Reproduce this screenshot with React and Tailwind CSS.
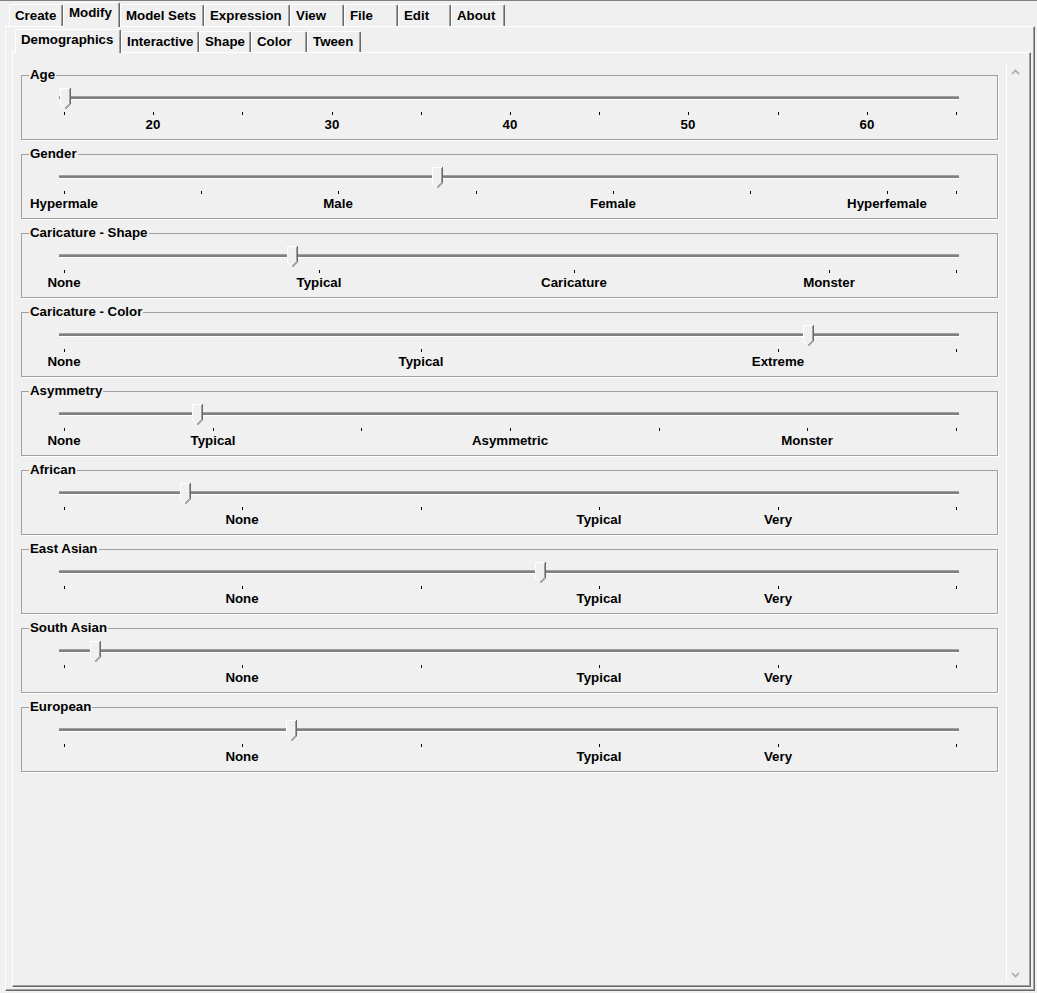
import React from 'react';

const topTabs = [
  { label: 'Create', w: 54 },
  { label: 'Modify', w: 57, active: true },
  { label: 'Model Sets', w: 84 },
  { label: 'Expression', w: 86 },
  { label: 'View', w: 54 },
  { label: 'File', w: 54 },
  { label: 'Edit', w: 53 },
  { label: 'About', w: 54 },
];

const subTabs = [
  { label: 'Demographics', w: 106, active: true },
  { label: 'Interactive', w: 78 },
  { label: 'Shape', w: 52 },
  { label: 'Color', w: 56 },
  { label: 'Tween', w: 54 },
];

// tick x positions across the 900px track, last tick always at the end
const makeTicks = (step) => {
  const arr = [];
  for (let x = 5; x < 896; x += step) arr.push(x);
  arr.push(897);
  return arr;
};

const ethnic = { step: 892 / 5, labels: [[1, 'None'], [3, 'Typical'], [4, 'Very']] };

const sliders = [
  { title: 'Age', step: 89.2, thumb: 6, labels: [[1, '20'], [3, '30'], [5, '40'], [7, '50'], [9, '60']] },
  { title: 'Gender', step: 892 / 6.5, thumb: 378, labels: [[0, 'Hypermale'], [2, 'Male'], [4, 'Female'], [6, 'Hyperfemale']] },
  { title: 'Caricature - Shape', step: 892 / 3.5, thumb: 233, labels: [[0, 'None'], [1, 'Typical'], [2, 'Caricature'], [3, 'Monster']] },
  { title: 'Caricature - Color', step: 892 / 2.5, thumb: 749, labels: [[0, 'None'], [1, 'Typical'], [2, 'Extreme']] },
  { title: 'Asymmetry', step: 892 / 6, thumb: 138, labels: [[0, 'None'], [1, 'Typical'], [3, 'Asymmetric'], [5, 'Monster']] },
  { title: 'African', ...ethnic, thumb: 126 },
  { title: 'East Asian', ...ethnic, thumb: 481 },
  { title: 'South Asian', ...ethnic, thumb: 36 },
  { title: 'European', ...ethnic, thumb: 232 },
];

function Thumb() {
  return (
    <svg width="11" height="21" viewBox="0 0 11 21">
      <polygon points="0,0 11,0 11,16 6,21 5,21 0,16" fill="#f0f0f0" />
      <polyline points="0.5,16 0.5,0.5 10,0.5" fill="none" stroke="#ffffff" />
      <polyline points="0.5,16 4.5,20" fill="none" stroke="#ffffff" />
      <polyline points="9.5,1 9.5,15.5 5,20" fill="none" stroke="#a0a0a0" />
      <polyline points="10.5,0 10.5,16 5.5,21" fill="none" stroke="#696969" />
    </svg>
  );
}

function Slider({ title, step, thumb, labels }) {
  const ticks = makeTicks(step);
  return (
    <div className="relative h-[65px] w-[977px] shrink-0 border border-[#a0a0a0] pl-[37px] pt-[12px] shadow-[1px_1px_0_#ffffff]">
      <span className="absolute left-[7px] top-[-9px] bg-[#f0f0f0] px-[1px] leading-[15px]">{title}</span>
      <div className="relative h-[50px] w-[900px]">
        <div className="absolute left-0 top-[8px] h-[4px] w-[900px] border-t border-b border-t-[#a0a0a0] border-b-[#ffffff] bg-[#808080]" />
        {ticks.map((x, i) => (
          <div key={i} className="absolute top-[24px] h-[3px] w-px bg-black" style={{ left: Math.round(x) }} />
        ))}
        {labels.map(([k, text]) => (
          <span
            key={text}
            className="absolute top-[29px] -translate-x-1/2 whitespace-nowrap leading-[15px]"
            style={{ left: Math.round(ticks[k]) }}
          >
            {text}
          </span>
        ))}
        <div className="absolute top-0" style={{ left: thumb - 5 }}>
          <Thumb />
        </div>
      </div>
    </div>
  );
}

function Chevron({ down }) {
  return (
    <svg width="9" height="6" viewBox="0 0 9 6">
      <polyline
        points={down ? '1,1 4.5,4.5 8,1' : '1,5 4.5,1.5 8,5'}
        fill="none"
        stroke="#a9a9a9"
        strokeWidth="1.6"
      />
    </svg>
  );
}

export default function App() {
  return (
    <div
      className="flex h-[993px] w-[1037px] flex-col overflow-hidden border-t border-[#808080] bg-[#f0f0f0] text-[13.3px] font-bold text-black"
      style={{ fontFamily: '"Liberation Sans", Arial, sans-serif' }}
    >
      {/* top tabs */}
      <div className="ml-[9px] mt-[1px] flex h-[24px] items-end">
        {topTabs.map((t) => (
          <div
            key={t.label}
            className={`flex shrink-0 items-start rounded-t-[2px] border-l border-t border-r border-l-white border-t-white border-r-[#696969] bg-[#f0f0f0] pl-[5px] shadow-[inset_-1px_0_0_#a0a0a0] ${
              t.active ? 'relative z-10 -mb-px h-[25px] pt-[2px]' : 'h-[22px] pt-[3px]'
            }`}
            style={{ width: t.w }}
          >
            <span className="leading-[15px]">{t.label}</span>
          </div>
        ))}
      </div>

      {/* outer panel */}
      <div className="mb-[2px] ml-[5px] flex w-[1030px] flex-1 flex-col border border-t-white border-l-white border-r-[#696969] border-b-[#696969] pl-[6px] pr-[3px] pt-[2px] pb-[3px] shadow-[inset_-1px_-1px_0_#a0a0a0]">
        {/* sub tabs */}
        <div className="ml-[3px] flex h-[23px] items-end">
          {subTabs.map((t) => (
            <div
              key={t.label}
              className={`flex shrink-0 items-start rounded-t-[2px] border-l border-t border-r border-l-white border-t-white border-r-[#696969] bg-[#f0f0f0] pl-[5px] shadow-[inset_-1px_0_0_#a0a0a0] ${
                t.active ? 'relative z-10 -mb-px h-[24px] pt-[2px]' : 'h-[21px] pt-[2px]'
              }`}
              style={{ width: t.w }}
            >
              <span className="leading-[15px]">{t.label}</span>
            </div>
          ))}
        </div>

        {/* inner panel */}
        <div className="flex flex-1 border border-t-white border-l-white border-r-[#696969] border-b-[#696969] shadow-[inset_-1px_-1px_0_#a0a0a0]">
          <div className="flex flex-1 flex-col gap-[14px] pl-[8px] pt-[22px]">
            {sliders.map((s) => (
              <Slider key={s.title} {...s} />
            ))}
          </div>
          <div className="mb-[4px] mr-[7px] mt-[10px] flex w-[17px] flex-col items-center justify-between border-l border-white pb-[4px] pt-[6px]">
            <Chevron />
            <Chevron down />
          </div>
        </div>
      </div>
    </div>
  );
}
